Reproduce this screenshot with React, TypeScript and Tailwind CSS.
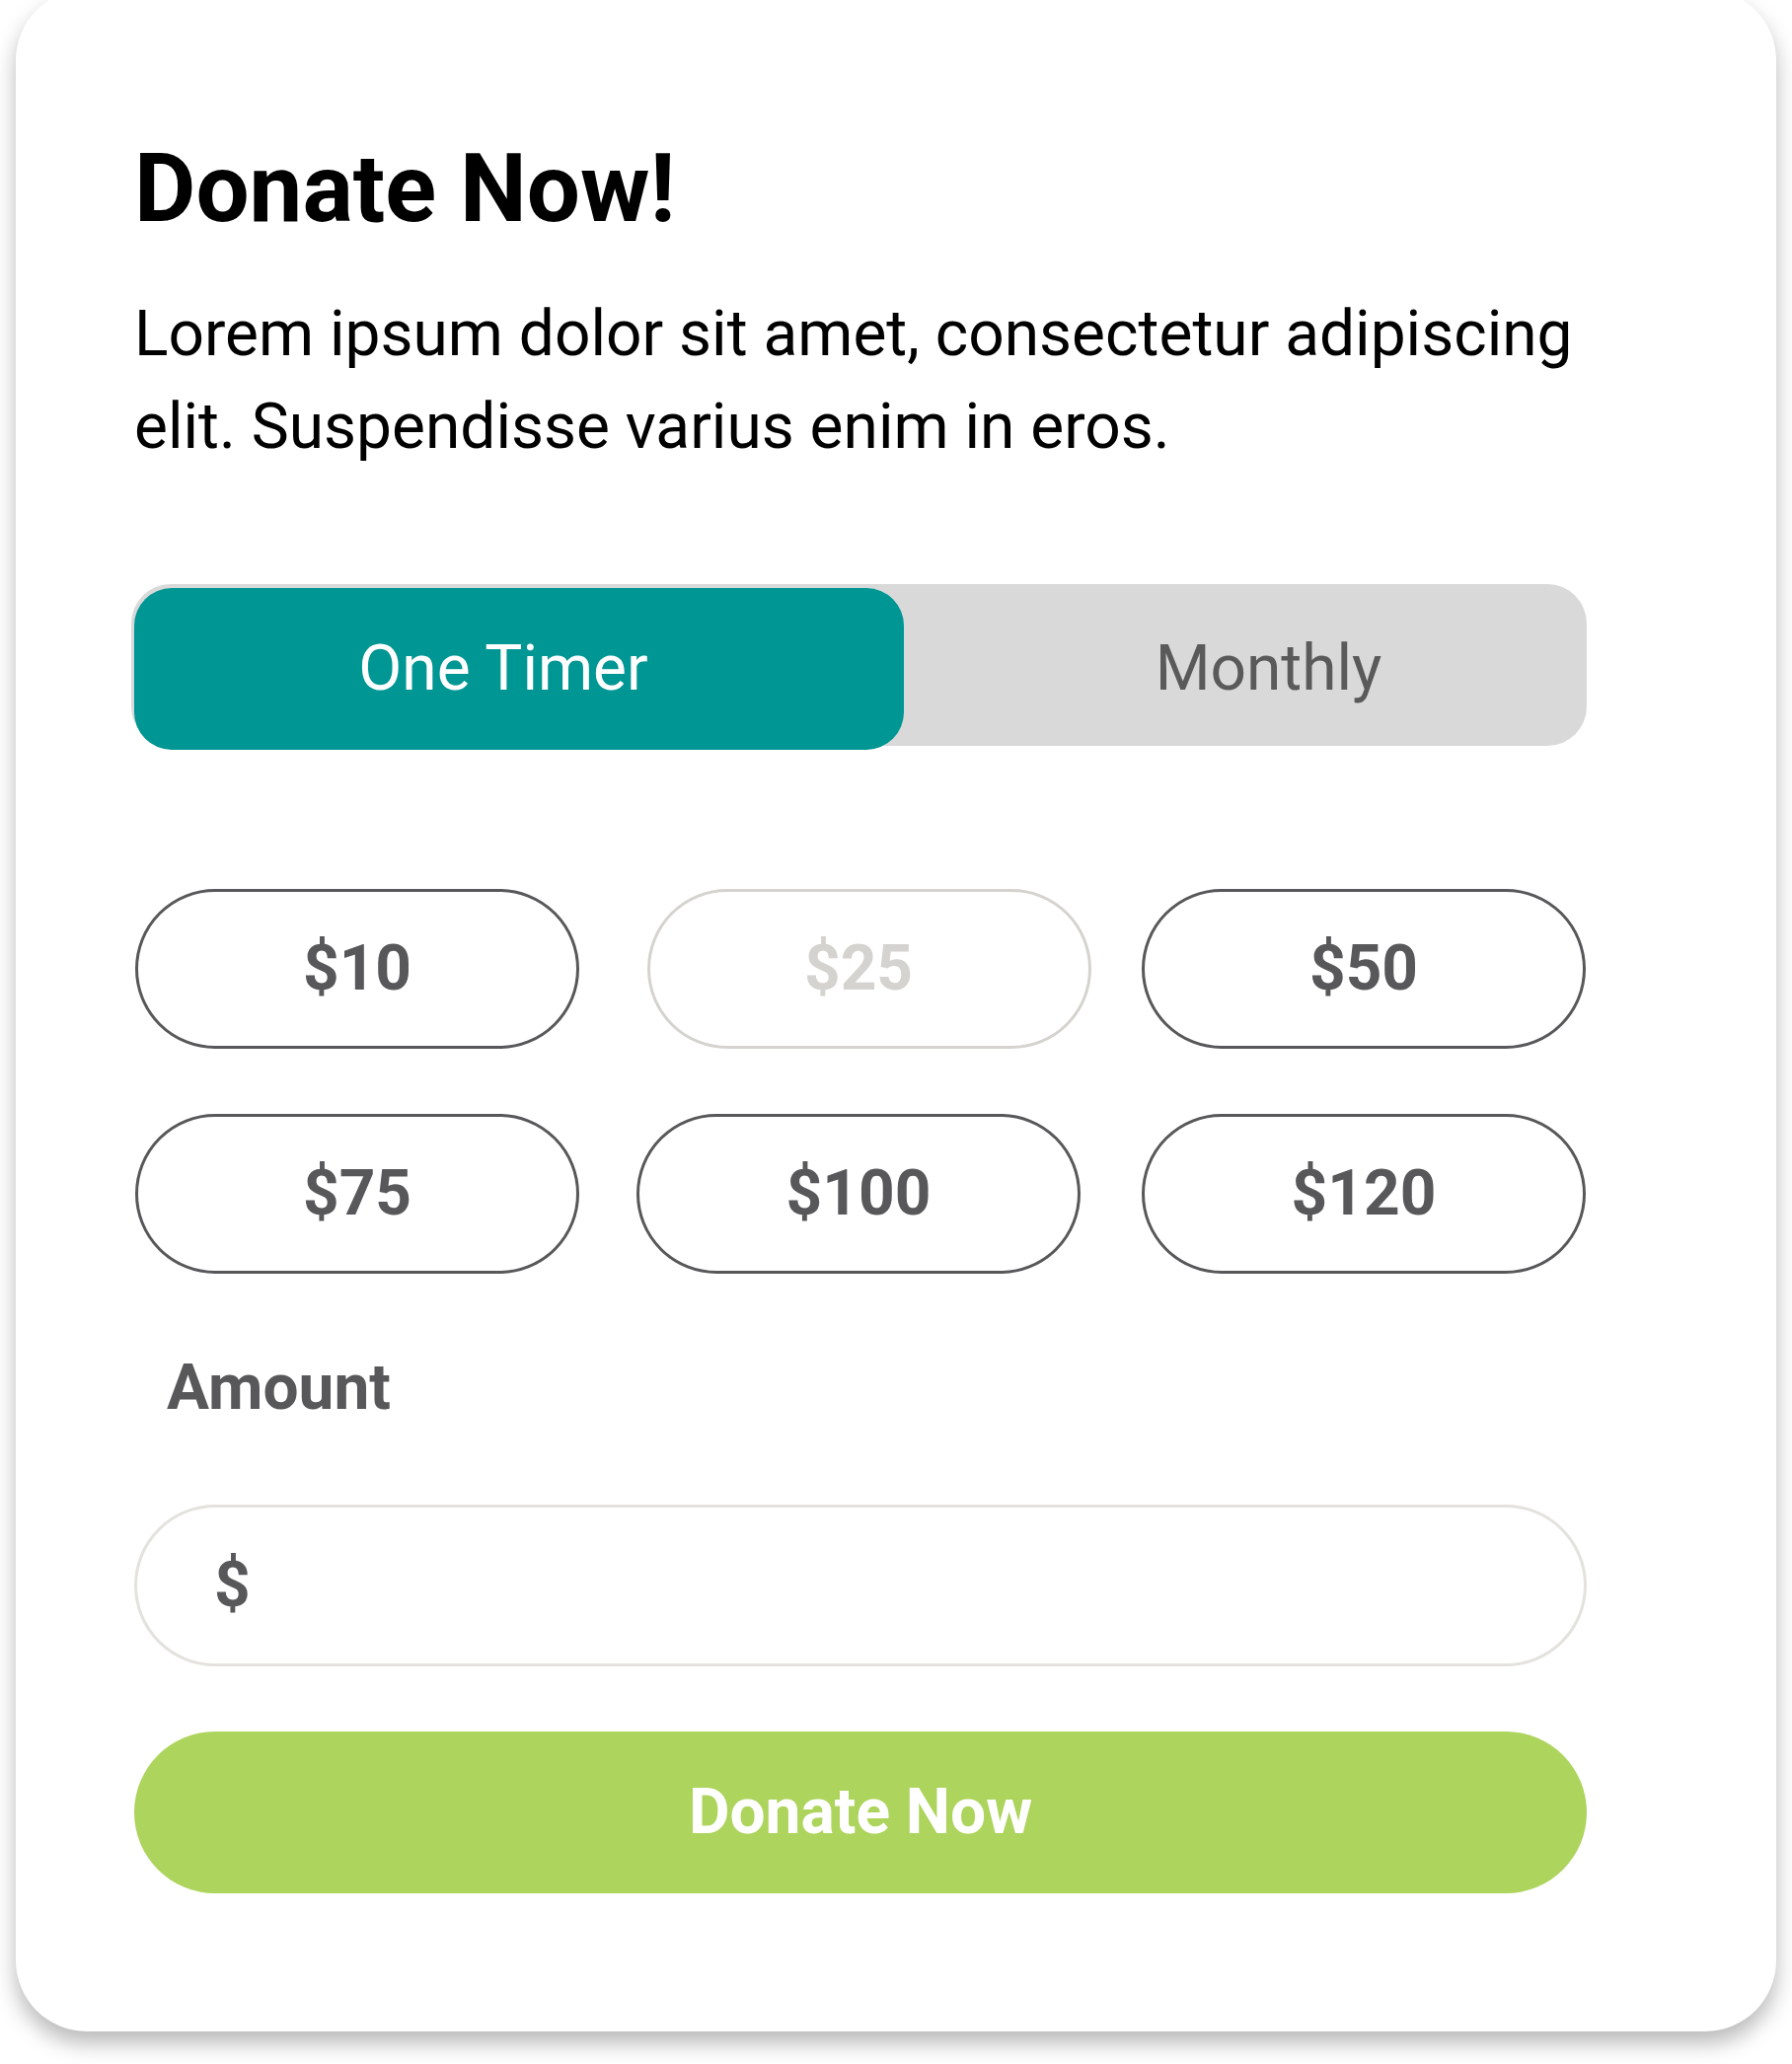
import React, { useState } from 'react'

const font = { fontFamily: 'Roboto, "Noto Sans", sans-serif' }

type Amount = { label: string; ml: string; muted?: boolean }

const rowOne: Amount[] = [
    { label: '$10', ml: 'ml-[1px]' },
    { label: '$25', ml: 'ml-[69px]', muted: true },
    { label: '$50', ml: 'ml-[51px]' },
]

const rowTwo: Amount[] = [
    { label: '$75', ml: 'ml-[1px]' },
    { label: '$100', ml: 'ml-[58px]' },
    { label: '$120', ml: 'ml-[62px]' },
]

function AmountButton({ item }: { item: Amount }) {
    return (
        <button
            className={`${item.ml} flex h-[162px] w-[450px] shrink-0 items-center justify-center rounded-full border-[3px] bg-white text-[64px] font-bold leading-none ${
                item.muted ? 'border-[#d5d3cf] pr-[22px] text-[#d5d3cf]' : 'border-[#58585a] text-[#58585a]'
            }`}
        >
            {item.label}
        </button>
    )
}

export default function App() {
    const [tab, setTab] = useState<'once' | 'monthly'>('once')

    return (
        <div className="h-[2092px] overflow-hidden bg-white px-4" style={font}>
            <div className="-mt-[11px] flex h-[2070px] flex-col rounded-[72px] bg-white pl-[120px] pr-[192px] shadow-[0_12px_22px_rgba(0,0,0,0.28)]">
                <h1 className="mt-[154px] text-[96px] font-bold leading-[96px] text-black">Donate Now!</h1>
                <p className="mt-[53px] text-[64px] leading-[94px] text-black">
                    Lorem ipsum dolor sit amet, consectetur adipiscing elit. Suspendisse varius enim in eros.
                </p>

                {/* Frequency toggle */}
                <div className="-ml-[3px] mt-[112px] flex h-[164px] w-[1475px] rounded-[40px] bg-[#d9d9d9] pl-[3px] pt-[4px]">
                    <button
                        onClick={() => setTab('once')}
                        className={`flex h-[164px] w-[780px] shrink-0 items-center justify-center rounded-[38px] pr-8 text-[64px] leading-none ${
                            tab === 'once' ? 'bg-[#009693] text-white' : 'text-[#5a5a5a]'
                        }`}
                    >
                        One Timer
                    </button>
                    <button
                        onClick={() => setTab('monthly')}
                        className={`flex h-[164px] w-[692px] shrink-0 items-center justify-center rounded-[38px] pl-[47px] text-[64px] leading-none ${
                            tab === 'monthly' ? 'bg-[#009693] text-white' : 'text-[#5a5a5a]'
                        }`}
                    >
                        Monthly
                    </button>
                </div>

                {/* Preset amounts */}
                <div className="mt-[145px] flex">
                    {rowOne.map((a) => (
                        <AmountButton key={a.label} item={a} />
                    ))}
                </div>
                <div className="mt-[66px] flex">
                    {rowTwo.map((a) => (
                        <AmountButton key={a.label} item={a} />
                    ))}
                </div>

                <label className="ml-[33px] mt-[84px] text-[64px] font-bold leading-[64px] text-[#58585a]">Amount</label>

                <div className="mt-[86px] flex h-[164px] w-[1472px] items-center rounded-full border-[3px] border-[#e3e2de] pl-[78px]">
                    <span className="text-[64px] font-bold leading-none text-[#58585a]">$</span>
                    <input className="ml-4 h-full flex-1 bg-transparent text-[64px] outline-none" />
                </div>

                <button className="mt-[66px] flex h-[164px] w-[1472px] items-center justify-center rounded-full bg-[#add45c] text-[64px] font-bold leading-none text-white">
                    Donate Now
                </button>
            </div>
        </div>
    )
}
